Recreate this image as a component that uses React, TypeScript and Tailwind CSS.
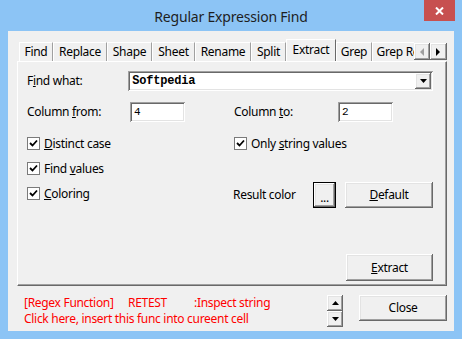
import React from "react"

const raised =
  "bg-[#f0f0f0] shadow-[inset_-1px_-1px_0_#696969,inset_1px_1px_0_#ffffff,inset_-2px_-2px_0_#a0a0a0,inset_2px_2px_0_#e3e3e3]"
const sunken =
  "bg-white shadow-[inset_1px_1px_0_#a0a0a0,inset_-1px_-1px_0_#ffffff,inset_2px_2px_0_#696969,inset_-2px_-2px_0_#e3e3e3]"

function Check({ label }: { label: React.ReactNode }) {
  return (
    <div className="flex items-center h-[13px]">
      <div className="w-[13px] h-[13px] border border-[#7a7a7a] bg-white flex items-center justify-center">
        <svg width="9" height="9" viewBox="0 0 9 9">
          <path d="M1 4 L3.5 6.5 L8 1.5" stroke="#000" strokeWidth="1.8" fill="none" />
        </svg>
      </div>
      <span className="ml-[4px] leading-[16px]">{label}</span>
    </div>
  )
}

const tabs: { name: string; w: number }[] = [
  { name: "Find", w: 34 },
  { name: "Replace", w: 54 },
  { name: "Shape", w: 45 },
  { name: "Sheet", w: 43 },
  { name: "Rename", w: 56 },
  { name: "Split", w: 35 },
  { name: "Extract", w: 50 },
  { name: "Grep", w: 36 },
  { name: "Grep Replace", w: 80 },
]

export default function App() {
  return (
    <div
      className="w-[462px] h-[339px] bg-[#8cc4f5] flex flex-col px-[8px] pb-[8px] text-[12px] tracking-[-0.3px] text-black"
      style={{ fontFamily: '"Noto Sans", "Open Sans", sans-serif' }}
    >
      {/* title bar */}
      <div className="relative h-[31px] flex items-center justify-center shrink-0">
        <span className="text-[14px] tracking-[-0.2px] text-[#1e1e1e] pt-[1px]">Regular Expression Find</span>
        <div className="absolute right-[-1px] top-0 w-[31px] h-[21px] bg-[#c75050] flex items-center justify-center">
          <svg width="9" height="8" viewBox="0 0 9 8">
            <path d="M1 0.5 L8 7.5 M8 0.5 L1 7.5" stroke="#fff" strokeWidth="2" />
          </svg>
        </div>
      </div>

      {/* client */}
      <div className="flex-1 bg-[#f0f0f0] flex flex-col pl-[9px] pr-[7px] pt-[8px]">
        {/* tab row */}
        <div className="flex items-end h-[22px] ml-[2px] relative z-10">
          <div className="flex items-end w-[395px] overflow-hidden h-[23px]">
            {tabs.map((t) => {
              const sel = t.name === "Extract"
              return (
                <div
                  key={t.name}
                  style={{ width: t.w }}
                  className={
                    sel
                      ? "shrink-0 h-[23px] mb-[-1px] bg-[#f0f0f0] border-l border-t border-white border-r-[#696969] border-r flex justify-center pt-[2px] leading-[16px]"
                      : "shrink-0 h-[19px] border-l border-t border-white border-r border-r-[#a0a0a0] flex justify-center pt-[1px] leading-[16px] whitespace-nowrap"
                  }
                >
                  {t.name}
                </div>
              )
            })}
          </div>
          <div className="flex self-start mt-[4px]">
            <div className={`${raised} w-[16px] h-[17px] flex items-center justify-center`}>
              <svg width="5" height="8" viewBox="0 0 5 8">
                <path d="M4 0 L0 4 L4 8 Z" fill="#a0a0a0" />
              </svg>
            </div>
            <div className={`${raised} w-[17px] h-[17px] flex items-center justify-center`}>
              <svg width="5" height="8" viewBox="0 0 5 8">
                <path d="M0 0 L4 4 L0 8 Z" fill="#000" />
              </svg>
            </div>
          </div>
        </div>

        {/* panel */}
        <div className="h-[225px] w-[430px] border-l border-t border-white border-r border-b border-r-[#696969] border-b-[#696969] shadow-[inset_-1px_-1px_0_#a0a0a0] flex flex-col pl-[9px] pt-[9px] pr-[13px] pb-[4px]">
          <div className="flex items-center h-[20px]">
            <span className="w-[103px]">
              F<u>i</u>nd what:
            </span>
            <div className={`${sunken} w-[310px] h-[20px] flex items-center pl-[4px] pr-[2px]`}>
              <span className="flex-1 font-bold text-[12px] tracking-[-0.2px]" style={{ fontFamily: '"Liberation Mono", monospace' }}>
                Softpedia
              </span>
              <div className={`${raised} w-[16px] h-[16px] flex items-center justify-center`}>
                <svg width="7" height="4" viewBox="0 0 7 4">
                  <path d="M0 0 L7 0 L3.5 4 Z" fill="#000" />
                </svg>
              </div>
            </div>
          </div>

          <div className="flex items-center h-[20px] mt-[11px]">
            <span className="w-[103px]">
              Column <u>f</u>rom:
            </span>
            <div className={`${sunken} w-[55px] h-[20px] flex items-center pl-[4px] text-[11px]`} style={{ fontFamily: '"Liberation Mono", monospace' }}>
              4
            </div>
            <span className="ml-[49px] w-[104px]">
              Column <u>t</u>o:
            </span>
            <div className={`${sunken} w-[55px] h-[20px] flex items-center pl-[4px] text-[11px]`} style={{ fontFamily: '"Liberation Mono", monospace' }}>
              2
            </div>
          </div>

          <div className="flex mt-[15px]">
            <div className="w-[208px] flex flex-col gap-[12px]">
              <Check label={<><u>D</u>istinct case</>} />
              <Check label={<>Find <u>v</u>alues</>} />
              <Check label={<><u>C</u>oloring</>} />
            </div>
            <div className="flex flex-col">
              <Check label={<>Only <u>s</u>tring values</>} />
              <div className="flex items-center mt-[32px] ml-[-1px]">
                <span className="w-[80px]">Result color</span>
                <div className="w-[23px] h-[26px] border border-black">
                  <div className={`${raised} w-full h-full flex items-end justify-center pb-[3px] leading-none`}>
                    ...
                  </div>
                </div>
                <div className={`${raised} w-[88px] h-[26px] ml-[9px] flex items-center justify-center`}>
                  <span>
                    <u>D</u>efault
                  </span>
                </div>
              </div>
            </div>
          </div>

          <div className="flex-1 flex items-end justify-end">
            <div className={`${raised} w-[87px] h-[27px] flex items-center justify-center`}>
              <span>
                <u>E</u>xtract
              </span>
            </div>
          </div>
        </div>

        {/* bottom bar */}
        <div className="flex pt-[9px] pl-[7px]">
          <div className="w-[304px] text-[#ff0000] leading-[16px] whitespace-nowrap">
            <div>
              <span className="inline-block w-[104px]">[Regex Function]</span>
              <span className="inline-block w-[66px]">RETEST</span>
              <span>:Inspect string</span>
            </div>
            <div>Click here, insert this func into cureent cell</div>
          </div>
          <div className="flex flex-col w-[16px]">
            <div className={`${raised} h-[16px] flex items-center justify-center`}>
              <svg width="7" height="4" viewBox="0 0 7 4">
                <path d="M0 4 L7 4 L3.5 0 Z" fill="#000" />
              </svg>
            </div>
            <div className={`${raised} h-[16px] flex items-center justify-center`}>
              <svg width="7" height="4" viewBox="0 0 7 4">
                <path d="M0 0 L7 0 L3.5 4 Z" fill="#000" />
              </svg>
            </div>
          </div>
          <div className={`${raised} w-[88px] h-[26px] ml-[16px] flex items-center justify-center`}>
            Close
          </div>
        </div>
      </div>
    </div>
  )
}
